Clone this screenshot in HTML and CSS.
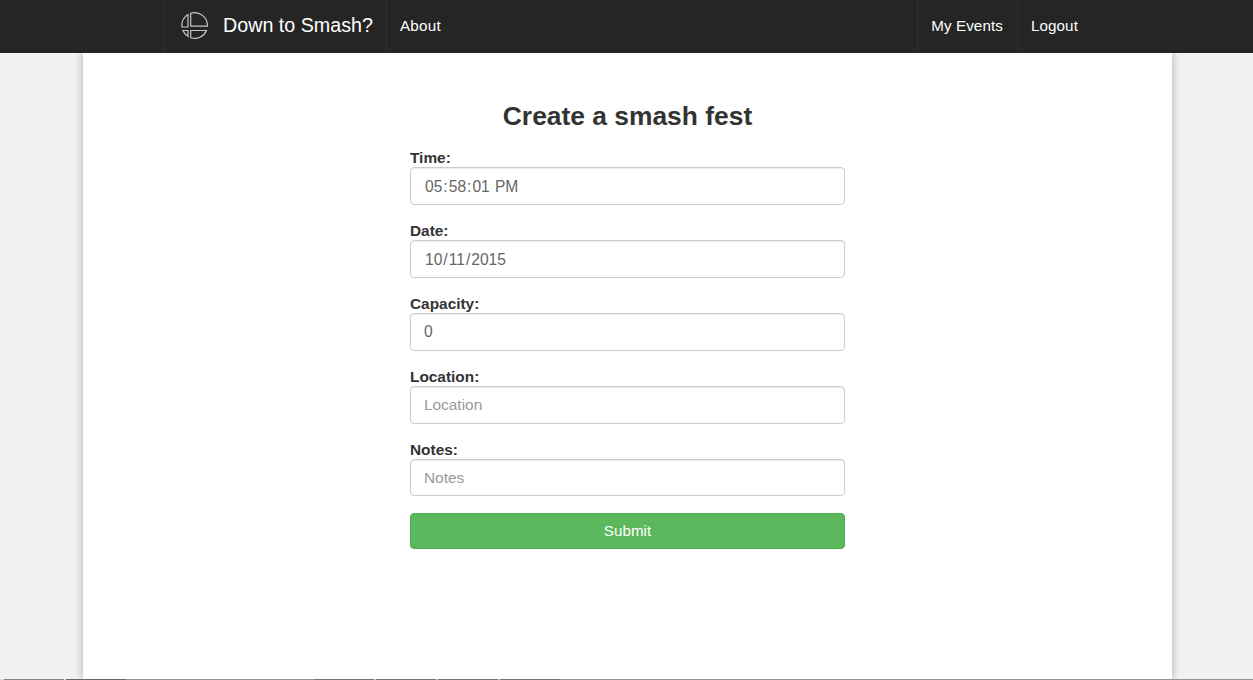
FILE: index.html

```html
<!DOCTYPE html>
<html lang="en">
<head>
    <meta charset="UTF-8">
    <title>Down to Smash?</title>
    <meta name="viewport" content="width=device-width, initial-scale=1.0">
    <link rel="stylesheet" href="styles.css">
</head>
<body>
<header class="navbar">
    <div class="nav-inner">
        <a class="brand" href="#">
            <svg class="logo" width="28" height="28" viewBox="0 0 28 28" fill="none" stroke="#c4c4c4" stroke-width="1.2">
                <path d="M10.7 1.3V14.2H27.4A12.8 12.8 0 0 0 10.7 1.3Z"/>
                <path d="M10.7 18.5V25.7A12.8 12.8 0 0 0 26.5 18.5Z"/>
                <path d="M8 2.6V15H1.9A12.8 12.8 0 0 1 8 2.6Z"/>
                <path d="M2.9 18.5H8V24.4A12.8 12.8 0 0 1 2.9 18.5Z"/>
            </svg>
            <span>Down to Smash?</span>
        </a>
        <a class="nav-link nav-about" href="#">About</a>
        <nav class="nav-right">
            <a class="nav-link" href="#">My Events</a>
            <a class="nav-link" href="#">Logout</a>
        </nav>
    </div>
</header>
<main class="sheet">
    <h1>Create a smash fest</h1>
    <form class="event-form">
        <div class="field">
            <label for="time">Time:</label>
            <input id="time" type="time" step="1" value="17:58:01">
        </div>
        <div class="field">
            <label for="date">Date:</label>
            <input id="date" type="date" value="2015-10-11">
        </div>
        <div class="field">
            <label for="capacity">Capacity:</label>
            <input id="capacity" class="input-plain" type="number" value="0">
        </div>
        <div class="field">
            <label for="location">Location:</label>
            <input id="location" class="input-plain" type="text" placeholder="Location">
        </div>
        <div class="field field-last">
            <label for="notes">Notes:</label>
            <input id="notes" class="input-plain" type="text" placeholder="Notes">
        </div>
        <button class="submit" type="button">Submit</button>
    </form>
</main>
<div class="page-edge"></div>
</body>
</html>
```

FILE: styles.css

```css
body {
    background-color: #f1f1f1;
    color: #333;
    font-family: "Liberation Sans", Arial, sans-serif;
    font-size: 14px;
    margin: 0;
    padding: 0;
    height: 680px;
    overflow: hidden;
    display: flex;
    flex-direction: column;
}
.navbar {
    background-color: #252525;
    height: 53px;
    flex: none;
    position: relative;
    z-index: 1;
}
.nav-inner {
    display: flex;
    height: 100%;
    width: 927px;
    margin-left: 164px;
    border-left: 1px solid #2e2e2e;
}
.navbar a {
    color: #fff;
    text-decoration: none;
}
.brand {
    display: flex;
    align-items: center;
    gap: 15px;
    padding: 0 13px 2px 15px;
    border-right: 1px solid #2e2e2e;
    font-size: 19.7px;
}
.logo {
    margin-top: 1px;
}
.nav-link {
    display: flex;
    align-items: center;
    padding: 0 14px 2px 13px;
    font-size: 15.2px;
    letter-spacing: 0.1px;
}
.nav-about {
    letter-spacing: 0.3px;
}
.nav-right {
    display: flex;
    margin-left: auto;
    border-left: 1px solid #2e2e2e;
}
.nav-right .nav-link:first-child {
    border-right: 1px solid #2e2e2e;
}
.sheet {
    background-color: #fff;
    width: 1089px;
    margin-left: 83px;
    flex: 1;
    box-shadow: 0 0 8px rgba(0, 0, 0, 0.3);
    padding-top: 47px;
    box-sizing: border-box;
}
h1 {
    font-size: 26.4px;
    line-height: 32px;
    text-align: center;
    margin: 0 0 17px;
    color: #333;
}
.event-form {
    width: 435px;
    margin: 0 auto;
}
.field {
    margin-bottom: 17px;
}
label {
    display: block;
    font-weight: bold;
    font-size: 15.4px;
    line-height: 18px;
}
input {
    display: block;
    width: 100%;
    height: 38px;
    box-sizing: border-box;
    padding: 8px 13px 6px;
    font-family: inherit;
    font-size: 15.6px;
    color: #666;
    background-color: #fff;
    border: 1px solid #ccc;
    border-radius: 4px;
    box-shadow: inset 0 1px 1px rgba(0, 0, 0, 0.075);
    outline: none;
}
.input-plain {
    padding: 6px 13px;
}
.field-last input {
    height: 37px;
}
input::placeholder {
    color: #999;
    font-size: 15.4px;
}
input::-webkit-calendar-picker-indicator,
input::-webkit-inner-spin-button {
    display: none;
}
.submit {
    display: block;
    width: 100%;
    height: 36px;
    padding: 0 0 2px;
    background-color: #5cb85c;
    border: 1px solid #4cae4c;
    border-radius: 4px;
    color: #fff;
    font-family: inherit;
    font-size: 15.2px;
    cursor: pointer;
}
.page-edge {
    flex: none;
    height: 1px;
    background: linear-gradient(to right,
        #ddd 4px, #888 4px, #888 64px, #ddd 64px, #ddd 66px,
        #666 66px, #666 126px, #99958c 126px, #99958c 314px,
        #777 314px, #777 374px, #ccc 374px, #ccc 376px,
        #777 376px, #777 436px, #ccc 436px, #ccc 438px,
        #777 438px, #777 498px, #ccc 498px, #ccc 500px,
        #777 500px, #777 560px, #99958c 560px);
}
```
